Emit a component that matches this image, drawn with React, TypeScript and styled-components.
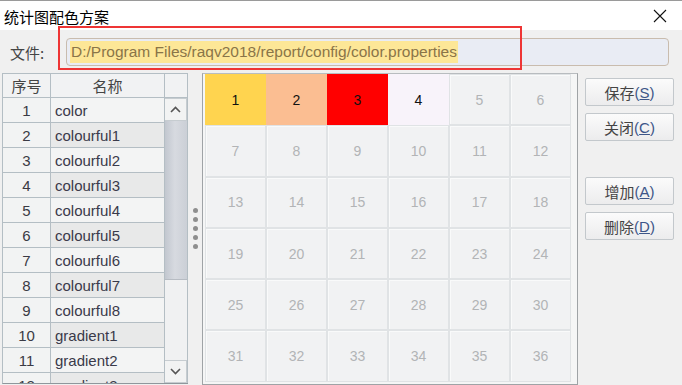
import styled, { createGlobalStyle } from "styled-components";

const GlobalStyle = createGlobalStyle`
  html, body {
    margin: 0;
    padding: 0;
    background: #f0f0f0;
  }
  * {
    box-sizing: border-box;
  }
`;

const schemes = [
  "color",
  "colourful1",
  "colourful2",
  "colourful3",
  "colourful4",
  "colourful5",
  "colourful6",
  "colourful7",
  "colourful8",
  "gradient1",
  "gradient2",
  "gradient3",
];

// 已设置颜色的格子，其余为空
const cellColors: Record<number, string> = {
  1: "#ffd44f",
  2: "#fbbe92",
  3: "#ff0000",
  4: "#f8f3fa",
};

const actions = [
  { label: "保存", key: "S" },
  { label: "关闭", key: "C" },
  { label: "增加", key: "A", spaced: true },
  { label: "删除", key: "D" },
];

export default function App() {
  const cells = Array.from({ length: 36 }, (_, i) => i + 1);

  return (
    <>
      <GlobalStyle />
      <Window>
        <TitleBar>
          <Title>统计图配色方案</Title>
          <CloseButton>
            <svg width="14" height="14" viewBox="0 0 14 14">
              <path d="M1 1 L13 13 M13 1 L1 13" stroke="#111" strokeWidth="1.1" />
            </svg>
          </CloseButton>
        </TitleBar>

        <FileRow>
          <FileLabel>文件:</FileLabel>
          <PathField>
            <PathText>D:/Program Files/raqv2018/report/config/color.properties</PathText>
          </PathField>
          <Annotation />
        </FileRow>

        <Main>
          <Table>
            <HeaderRow>
              <HeaderCell>序号</HeaderCell>
              <HeaderCell>名称</HeaderCell>
              <HeaderCell />
            </HeaderRow>
            <TableBody>
              <Rows>
                {schemes.map((name, i) => (
                  <Row key={name}>
                    <IndexCell>{i + 1}</IndexCell>
                    <NameCell $alt={i % 2 === 1}>{name}</NameCell>
                  </Row>
                ))}
              </Rows>
              <ScrollBar>
                <ScrollButton>
                  <svg width="11" height="7" viewBox="0 0 11 7">
                    <path d="M1 6 L5.5 1.5 L10 6" fill="none" stroke="#555" strokeWidth="1.6" />
                  </svg>
                </ScrollButton>
                <Thumb />
                <Track />
                <ScrollButton>
                  <svg width="11" height="7" viewBox="0 0 11 7">
                    <path d="M1 1 L5.5 5.5 L10 1" fill="none" stroke="#555" strokeWidth="1.6" />
                  </svg>
                </ScrollButton>
              </ScrollBar>
            </TableBody>
          </Table>

          <Splitter>
            {[0, 1, 2, 3, 4].map((d) => (
              <Dot key={d} />
            ))}
          </Splitter>

          <ColorGrid>
            {cells.map((n) => (
              <ColorCell key={n} $color={cellColors[n]}>
                {n}
              </ColorCell>
            ))}
          </ColorGrid>

          <ButtonColumn>
            {actions.map((a) => (
              <ActionButton key={a.key} $spaced={a.spaced}>
                {a.label}
                <Mnemonic>
                  (<u>{a.key}</u>)
                </Mnemonic>
              </ActionButton>
            ))}
          </ButtonColumn>
        </Main>
      </Window>
    </>
  );
}

const Window = styled.div`
  width: 682px;
  height: 385px;
  overflow: hidden;
  background: #f0f0f0;
  font-family: "Liberation Sans", "Noto Sans CJK SC", sans-serif;
  color: #333;
  border-top: 1px solid #9a9a9a;
`;

const TitleBar = styled.div`
  height: 29px;
  display: flex;
  align-items: center;
  justify-content: space-between;
  padding: 1px 15px 0 4px;
  background: #ffffff;
`;

const Title = styled.div`
  font-family: "Noto Sans CJK SC", sans-serif;
  font-size: 15px;
  color: #000;
`;

const CloseButton = styled.div`
  display: flex;
  align-items: center;
`;

const FileRow = styled.div`
  position: relative;
  display: flex;
  align-items: center;
  height: 43px;
  padding: 8px 13px 7px 10px;
`;

const FileLabel = styled.div`
  width: 56px;
  font-family: "Noto Sans CJK SC", sans-serif;
  font-size: 15px;
  color: #444;
`;

const PathField = styled.div`
  flex: 1;
  height: 28px;
  display: flex;
  align-items: center;
  padding: 0 3px;
  background: #e9ecf4;
  border: 1px solid #c9bcae;
  border-radius: 4px;
`;

const PathText = styled.span`
  font-size: 15.5px;
  line-height: 22px;
  padding: 0 1px;
  background: #fde797;
  color: #8a7548;
  white-space: nowrap;
`;

const Annotation = styled.div`
  position: absolute;
  left: 58px;
  top: -4px;
  width: 464px;
  height: 44px;
  border: 2px solid #ee3535;
  pointer-events: none;
`;

const Main = styled.div`
  display: flex;
  align-items: flex-start;
  padding-left: 2px;
  height: 312px;
`;

const Table = styled.div`
  width: 186px;
  height: 311px;
  overflow: hidden;
  border-left: 1px solid #b4bec4;
  border-top: 1px solid #b4bec4;
  border-bottom: 1px solid #8f979c;
  display: flex;
  flex-direction: column;
  background: #f2f3f3;
`;

const HeaderRow = styled.div`
  display: grid;
  grid-template-columns: 48px 114px 23px;
  height: 24px;
  flex-shrink: 0;
`;

const HeaderCell = styled.div`
  display: flex;
  align-items: center;
  justify-content: center;
  font-family: "Noto Sans CJK SC", sans-serif;
  font-size: 15px;
  color: #444;
  background: #f1f2f3;
  border-right: 1px solid #b4bec4;
  border-bottom: 1px solid #b4bec4;
`;

const TableBody = styled.div`
  display: flex;
  flex: 1;
  min-height: 0;
`;

const Rows = styled.div`
  width: 162px;
  display: flex;
  flex-direction: column;
`;

const Row = styled.div`
  display: grid;
  grid-template-columns: 48px 114px;
  height: 25px;
  flex-shrink: 0;
`;

const IndexCell = styled.div`
  display: flex;
  align-items: center;
  justify-content: center;
  font-size: 15px;
  color: #3a3a44;
  background: #f2f3f3;
  border-right: 1px solid #b4bec4;
  border-bottom: 1px solid #b4bec4;
`;

const NameCell = styled.div<{ $alt?: boolean }>`
  display: flex;
  align-items: center;
  padding-left: 4px;
  font-size: 15px;
  color: #3a3a4a;
  background: ${(p) => (p.$alt ? "#e8e9e9" : "#f3f4f4")};
  border-right: 1px solid #b4bec4;
  border-bottom: 1px solid #b4bec4;
`;

const ScrollBar = styled.div`
  width: 23px;
  display: flex;
  flex-direction: column;
  background: #f0f1f2;
  border-right: 1px solid #b4bec4;
`;

const ScrollButton = styled.div`
  height: 23px;
  flex-shrink: 0;
  display: flex;
  align-items: center;
  justify-content: center;
  background: #f2f3f3;
  border: 1px solid #c6ccd0;
  border-left: none;
`;

const Thumb = styled.div`
  height: 159px;
  flex-shrink: 0;
  background: linear-gradient(to right, #c2c7cf, #d7dae0 45%, #cbcfd6);
  border-bottom: 1px solid #b7bcc3;
`;

const Track = styled.div`
  flex: 1;
  background: #f0f1f2;
`;

const Splitter = styled.div`
  width: 14px;
  align-self: stretch;
  display: flex;
  flex-direction: column;
  align-items: center;
  justify-content: center;
  gap: 4px;
  padding-bottom: 2px;
`;

const Dot = styled.div`
  width: 5px;
  height: 5px;
  border-radius: 50%;
  background: #8e8e8e;
`;

const ColorGrid = styled.div`
  width: 376px;
  height: 312px;
  display: grid;
  grid-template-columns: repeat(6, 61px);
  grid-template-rows: repeat(6, 51.3px);
  padding: 0 0 0 2px;
  background: #f5f6f6;
  border: 1px solid #9fa3a6;
  border-top-color: #b8bcbf;
`;

const ColorCell = styled.div<{ $color?: string }>`
  display: flex;
  align-items: center;
  justify-content: center;
  font-size: 14px;
  color: ${(p) => (p.$color ? "#111" : "#b2b4b6")};
  background: ${(p) => p.$color ?? "#f1f2f3"};
  border: ${(p) => (p.$color ? "none" : "1px solid #e0e3e5")};
  box-shadow: ${(p) => (p.$color ? "none" : "inset 1px 1px 0 #f9fafa")};
`;

const ButtonColumn = styled.div`
  display: flex;
  flex-direction: column;
  gap: 7px;
  margin: 5px 0 0 7px;
`;

const ActionButton = styled.div<{ $spaced?: boolean }>`
  width: 89px;
  height: 28px;
  display: flex;
  align-items: center;
  justify-content: center;
  margin-top: ${(p) => (p.$spaced ? "29px" : "0")};
  font-family: "Noto Sans CJK SC", sans-serif;
  font-size: 15px;
  color: #444;
  background: linear-gradient(#fbfbfb, #ececed);
  border: 1px solid #c3c8cc;
  border-radius: 2px;
`;

const Mnemonic = styled.span`
  font-family: "Liberation Sans", sans-serif;
  color: #3d5688;
`;
